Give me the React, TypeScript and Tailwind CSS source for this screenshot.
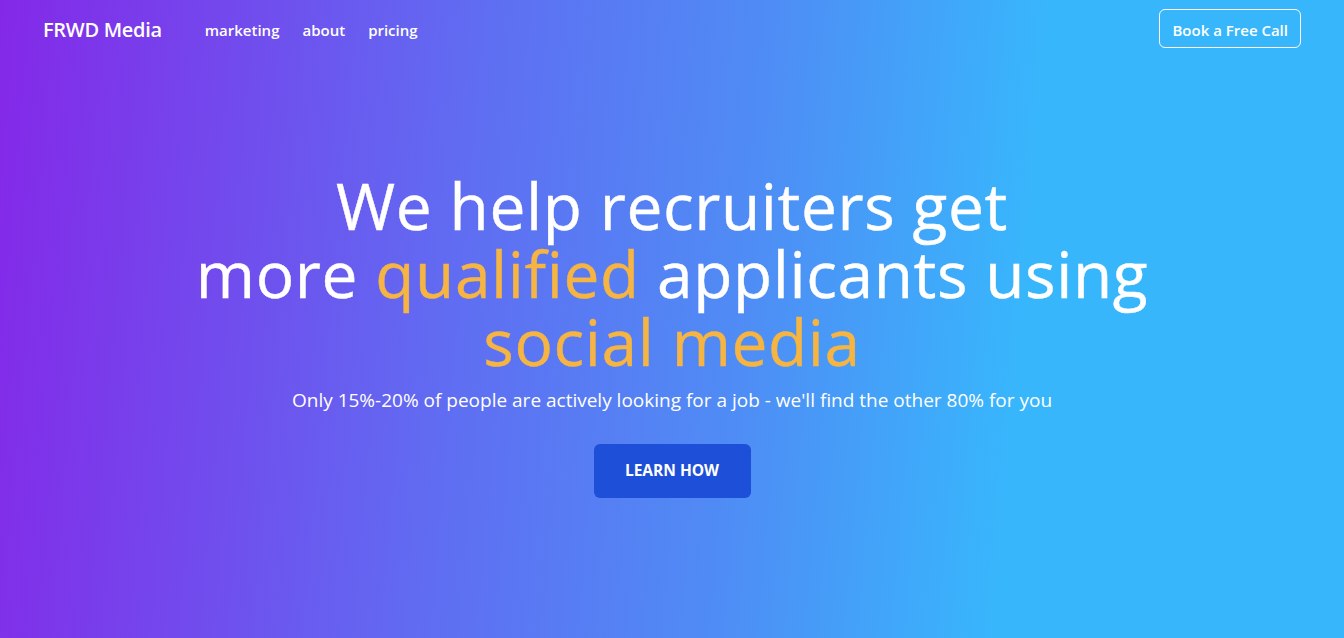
const navLinks = ["marketing", "about", "pricing"];

export default function App() {
  return (
    <div className="h-[638px] w-full bg-[linear-gradient(95deg,#8428e8_0%,#5f6ef2_35%,#4f8cf5_55%,#38b6fc_75%,#38b6fc_100%)] font-['Open_Sans',sans-serif] text-white">
      <header className="flex items-center justify-between pl-[43px] pr-[43px] pt-[9px]">
        <div className="flex items-center pt-[3px]">
          <span className="text-[20px] font-semibold tracking-[-0.3px]">FRWD Media</span>
          <nav className="ml-[43px] flex gap-[23px]">
            {navLinks.map((l) => (
              <a key={l} href="#" className="text-[15px] font-semibold">
                {l}
              </a>
            ))}
          </nav>
        </div>
        <button className="h-[39px] rounded-md border border-white px-[12px] pt-[3px] text-[15px] font-semibold">
          Book a Free Call
        </button>
      </header>

      <main className="flex flex-col items-center pt-[124px] text-center">
        <h1 className="text-[64px] font-medium leading-[68px] tracking-[0.6px] [-webkit-text-stroke:0.4px_currentColor]">
          <span className="block">We help recruiters get</span>
          <span className="block">
            more <span className="text-[#f6b443]">qualified</span> applicants using
          </span>
          <span className="block text-[#f6b443]">social media</span>
        </h1>
        <p className="mt-[10px] text-[19px]">
          Only 15%-20% of people are actively looking for a job - we'll find the other 80% for you
        </p>
        <button className="mt-[29px] h-[54px] w-[157px] rounded-md bg-[#1e4fd8] text-[15.5px] font-bold">
          LEARN HOW
        </button>
      </main>
    </div>
  );
}
